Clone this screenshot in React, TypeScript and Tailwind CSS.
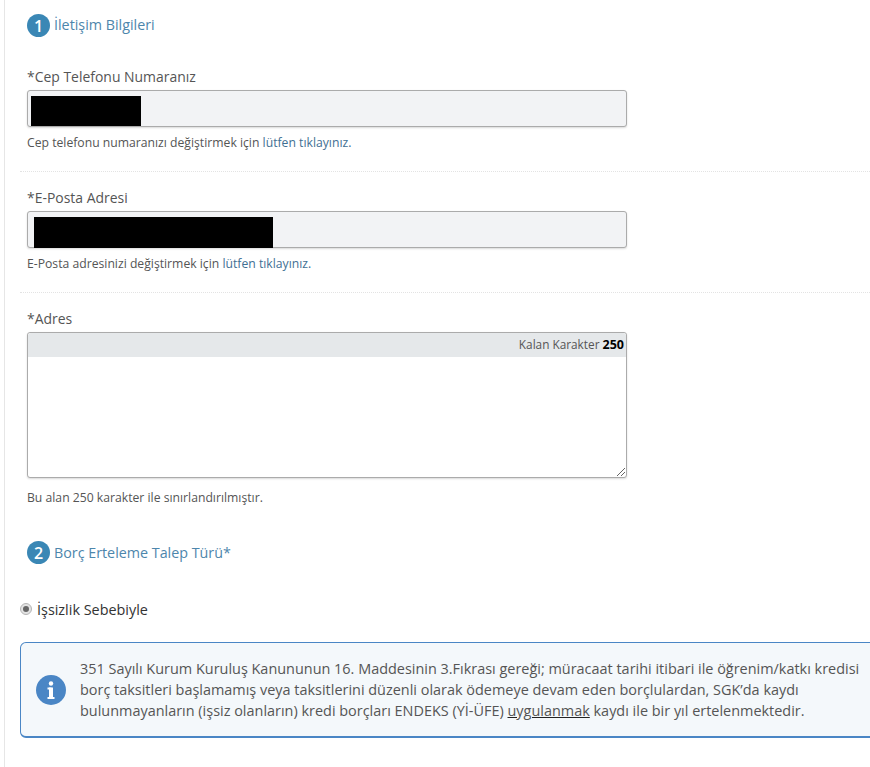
import React from "react";

function Step({ n, title, shift }: { n: number; title: string; shift: string }) {
  return (
    <div className="flex items-center h-[23px] ml-[27px]">
      <span className="w-[23px] h-[23px] rounded-full bg-[#3a87b5] text-white text-[16px] font-semibold flex items-center justify-center leading-none">{n}</span>
      <span className={`ml-1 text-[14.3px] text-[#4d86ac] leading-[21px] ${shift}`}>{title}</span>
    </div>
  );
}

function Label({ children }: { children: React.ReactNode }) {
  return <div className="text-[13.95px] leading-[20px] text-[#555555] ml-[27px]">{children}</div>;
}

function Field({ mask }: { mask: string }) {
  return (
    <div className="ml-[27px] w-[600px] h-[37px] mt-[3px] bg-[#f2f3f5] border border-[#ababab] rounded-[3px] shadow-[0_1px_2px_rgba(0,0,0,0.15)] flex items-end">
      <div className={mask}></div>
    </div>
  );
}

export default function App() {
  return (
    <div className="w-[870px] h-[767px] overflow-hidden bg-white font-['Open_Sans',sans-serif]">
      <div className="ml-1 h-full border-l border-[#e6e6e6] pt-[14px]">
        <div className="-ml-[5px]">
          <Step n={1} title="İletişim Bilgileri" shift="-mt-[2px]" />
          <div className="mt-[30px]"><Label>*Cep Telefonu Numaranız</Label></div>
          <Field mask="w-[110px] h-[30px] bg-black ml-[3px]" />
          <p className="ml-[27px] mt-[7px] text-[12.2px] leading-[17px] text-[#555555]">Cep telefonu numaranızı değiştirmek için <span className="text-[#3f6f93]">lütfen tıklayınız.</span></p>
          <div className="ml-[20px] mt-[20px] border-t border-dotted border-[#e3e3e3]"></div>
          <div className="mt-[16px]"><Label>*E-Posta Adresi</Label></div>
          <Field mask="w-[239px] h-[31px] bg-black ml-[6px] mb-[-1px]" />
          <p className="ml-[27px] mt-[7px] text-[12.2px] leading-[17px] text-[#555555]">E-Posta adresinizi değiştirmek için <span className="text-[#3f6f93]">lütfen tıklayınız.</span></p>
          <div className="ml-[20px] mt-[20px] border-t border-dotted border-[#e3e3e3]"></div>
          <div className="mt-[16px]"><Label>*Adres</Label></div>
          <div className="ml-[27px] w-[600px] h-[146px] mt-[3px] bg-white border border-[#ababab] rounded-[3px] shadow-[0_1px_2px_rgba(0,0,0,0.15)] relative">
            <div className="h-[24px] bg-[#e5e8ea] flex items-center justify-end pr-[2px] text-[11.8px] text-[#555555] rounded-t-[3px]">
              <span>Kalan Karakter&nbsp;<b className="text-black font-bold text-[12.5px]">250</b></span>
            </div>
            <svg className="absolute right-0 bottom-0" width="11" height="11" viewBox="0 0 11 11">
              <path d="M10 2 L2 10 M10 6 L6 10" stroke="#666" strokeWidth="1" fill="none" />
            </svg>
          </div>
          <p className="ml-[27px] mt-[11px] text-[12.2px] leading-[17px] text-[#555555]">Bu alan 250 karakter ile sınırlandırılmıştır.</p>
          <div className="mt-[35px]"><Step n={2} title="Borç Erteleme Talep Türü*" shift="mt-0" /></div>
          <div className="mt-[36px] ml-[20px] flex items-center h-[20px]">
            <span className="w-[12px] h-[12px] rounded-full bg-[#e3e3e3] border border-[#b5b5b5] flex items-center justify-center -mt-[2px]">
              <span className="w-[6px] h-[6px] rounded-full bg-[#666666]"></span>
            </span>
            <span className="ml-[5px] text-[14.4px] text-[#333333]">İşsizlik Sebebiyle</span>
          </div>
          <div className="ml-[20px] mt-[22px] w-[900px] h-[96px] bg-[#f4f8fb] border border-[#4a86c5] border-b-2 rounded-[6px] flex items-center">
            <svg className="ml-[15px] shrink-0" width="30" height="30" viewBox="0 0 30 30">
              <circle cx="15" cy="15" r="15" fill="#4a86c5" />
              <circle cx="15" cy="8.5" r="2.2" fill="#fff" />
              <rect x="13" y="12.5" width="4" height="11" fill="#fff" />
              <rect x="11.5" y="12.5" width="4" height="2" fill="#fff" />
              <rect x="11.5" y="22" width="7" height="2" fill="#fff" />
            </svg>
            <div className="ml-[14px] w-[790px] text-[14.45px] leading-[21px] text-[#555555]">
              351 Sayılı Kurum Kuruluş Kanununun 16. Maddesinin 3.Fıkrası gereği; müracaat tarihi itibari ile öğrenim/katkı kredisi borç taksitleri başlamamış veya taksitlerini düzenli olarak ödemeye devam eden borçlulardan, SGK’da kaydı bulunmayanların (işsiz olanların) kredi borçları ENDEKS (Yİ-ÜFE) <span className="underline decoration-[#222222]">uygulanmak</span> kaydı ile bir yıl ertelenmektedir.
            </div>
          </div>
        </div>
      </div>
    </div>
  );
}
